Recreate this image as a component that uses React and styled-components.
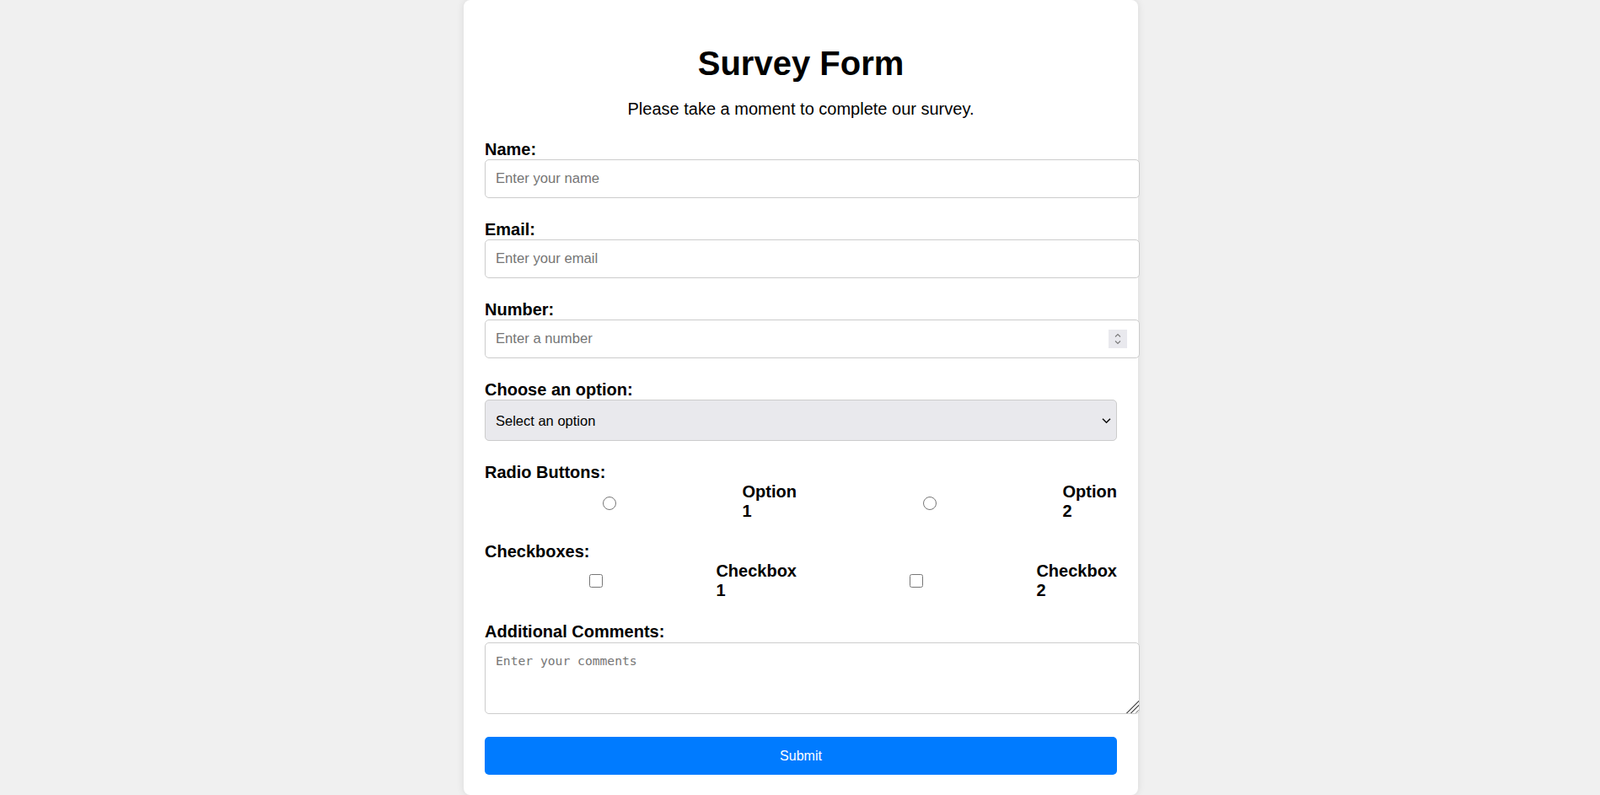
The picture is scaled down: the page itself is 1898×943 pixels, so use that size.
import React from "react";
import styled, { createGlobalStyle } from "styled-components";

const GlobalStyle = createGlobalStyle`
  html, body {
    margin: 0;
    padding: 0;
    background: #f0f0f0;
    font-family: "Liberation Sans", Arial, sans-serif;
  }
`;

const Card = styled.div`
  width: 750px;
  margin: 0 0 0 calc(50% - 399px);
  padding: 25px 25px 24px;
  background: #ffffff;
  border-radius: 8px;
  box-shadow: 0 0 10px rgba(0, 0, 0, 0.1);
`;

const Title = styled.h1`
  margin: 28px 0 20px;
  font-size: 40px;
  font-weight: bold;
  text-align: center;
  color: #000;
`;

const Subtitle = styled.p`
  margin: 0 0 25px;
  font-size: 20px;
  text-align: center;
  color: #000;
`;

const Form = styled.form`
  display: block;
`;

const Group = styled.div`
  margin-bottom: ${(p) => (p.$gap ? p.$gap : 26)}px;
`;

const Label = styled.label`
  display: block;
  margin: 0;
  font-size: 20px;
  font-weight: bold;
  color: #000;
`;

const Field = styled.div`
  position: relative;
`;

const TextInput = styled.input`
  display: block;
  box-sizing: content-box;
  width: 100%;
  margin: 0;
  padding: 12px 13px 12px 12px;
  font-family: "Liberation Sans", Arial, sans-serif;
  font-size: 16.67px;
  line-height: 20px;
  border: 1px solid #ccc;
  border-radius: 5px;
  background: #fff;
  color: #000;
  &::placeholder {
    color: #757575;
  }
  &::-webkit-inner-spin-button,
  &::-webkit-outer-spin-button {
    -webkit-appearance: none;
    margin: 0;
  }
  -moz-appearance: textfield;
`;

const Spinner = styled.span`
  position: absolute;
  right: -12px;
  top: 50%;
  transform: translateY(-50%);
  width: 22px;
  height: 22px;
  display: flex;
  align-items: center;
  justify-content: center;
  background: #e9e9ee;
  pointer-events: none;
`;

const Select = styled.select`
  display: block;
  box-sizing: border-box;
  width: 100%;
  margin: 0;
  padding: 12px 30px 12px 12px;
  height: 49px;
  font-family: "Liberation Sans", Arial, sans-serif;
  font-size: 16.5px;
  color: #000;
  background-color: #e9e9ed;
  border: 1px solid #ccc;
  border-radius: 5px;
  appearance: none;
  -webkit-appearance: none;
`;

const SelectArrow = styled.span`
  position: absolute;
  right: 7px;
  top: 50%;
  transform: translateY(-50%);
  display: flex;
  pointer-events: none;
`;

const ChoiceRow = styled.div`
  display: flex;
  gap: 10px;
`;

const Choice = styled.label`
  flex: 1 1 0;
  display: flex;
  align-items: center;
  gap: 10px;
  font-size: 20px;
  font-weight: bold;
  color: #000;
`;

const ControlSlot = styled.span`
  flex: 1 1 0;
  display: flex;
  justify-content: center;
  align-items: center;
`;

const Control = styled.input`
  margin: ${(p) => (p.type === "radio" ? "3px 0 0" : "0")};
  width: 16px;
  height: 16px;
`;

const ChoiceText = styled.span`
  width: min-content;
  line-height: 23px;
`;

const TextArea = styled.textarea`
  display: block;
  box-sizing: content-box;
  width: 100%;
  height: 59px;
  margin: 1px 0 0;
  padding: 12px 13px 12px 12px;
  font-family: "DejaVu Sans Mono", "Liberation Mono", monospace;
  font-size: 14.67px;
  border: 1px solid #ccc;
  border-radius: 5px;
  background: #fff;
  resize: both;
  &::placeholder {
    color: #757575;
  }
  &::-webkit-scrollbar {
    width: 16px;
    height: 16px;
    background: transparent;
  }
  &::-webkit-resizer {
    background:
      linear-gradient(135deg, #fff 50%, transparent 50%),
      repeating-linear-gradient(135deg, #fff 0 2.6px, #6e6e6e 2.6px 3.8px);
    border-bottom-right-radius: 5px;
  }
`;

const Submit = styled.button`
  display: block;
  width: 100%;
  height: 45px;
  margin: 0;
  padding: 0;
  font-family: "Liberation Sans", Arial, sans-serif;
  font-size: 16px;
  color: #fff;
  background: #007bff;
  border: none;
  border-radius: 5px;
  cursor: pointer;
`;

function SpinIcon() {
  return (
    <svg width="10" height="16" viewBox="0 0 10 16" aria-hidden="true">
      <path d="M2 5.5 L5 2.5 L8 5.5" fill="none" stroke="#7a7a7a" strokeWidth="1.1" />
      <path d="M2 10.5 L5 13.5 L8 10.5" fill="none" stroke="#7a7a7a" strokeWidth="1.1" />
    </svg>
  );
}

function ChevronIcon() {
  return (
    <svg width="11" height="7" viewBox="0 0 11 7" aria-hidden="true">
      <path d="M1 1.2 L5.5 5.7 L10 1.2" fill="none" stroke="#111" strokeWidth="1.6" />
    </svg>
  );
}

export default function App() {
  return (
    <>
      <GlobalStyle />
      <Card>
        <Title>Survey Form</Title>
        <Subtitle>Please take a moment to complete our survey.</Subtitle>
        <Form onSubmit={(e) => e.preventDefault()}>
          <Group>
            <Label htmlFor="name">Name:</Label>
            <TextInput id="name" type="text" placeholder="Enter your name" />
          </Group>
          <Group>
            <Label htmlFor="email">Email:</Label>
            <TextInput id="email" type="email" placeholder="Enter your email" />
          </Group>
          <Group>
            <Label htmlFor="number">Number:</Label>
            <Field>
              <TextInput id="number" type="number" placeholder="Enter a number" />
              <Spinner>
                <SpinIcon />
              </Spinner>
            </Field>
          </Group>
          <Group>
            <Label htmlFor="option">Choose an option:</Label>
            <Field>
              <Select id="option" defaultValue="">
                <option value="">Select an option</option>
                <option value="1">Option 1</option>
                <option value="2">Option 2</option>
              </Select>
              <SelectArrow>
                <ChevronIcon />
              </SelectArrow>
            </Field>
          </Group>
          <Group $gap={25}>
            <Label as="div">Radio Buttons:</Label>
            <ChoiceRow>
              <Choice>
                <ControlSlot>
                  <Control type="radio" name="radio" value="1" />
                </ControlSlot>
                <ChoiceText>Option 1</ChoiceText>
              </Choice>
              <Choice>
                <ControlSlot>
                  <Control type="radio" name="radio" value="2" />
                </ControlSlot>
                <ChoiceText>Option 2</ChoiceText>
              </Choice>
            </ChoiceRow>
          </Group>
          <Group>
            <Label as="div">Checkboxes:</Label>
            <ChoiceRow>
              <Choice>
                <ControlSlot>
                  <Control type="checkbox" value="1" />
                </ControlSlot>
                <ChoiceText>Checkbox 1</ChoiceText>
              </Choice>
              <Choice>
                <ControlSlot>
                  <Control type="checkbox" value="2" />
                </ControlSlot>
                <ChoiceText>Checkbox 2</ChoiceText>
              </Choice>
            </ChoiceRow>
          </Group>
          <Group $gap={27}>
            <Label htmlFor="comments">Additional Comments:</Label>
            <TextArea id="comments" placeholder="Enter your comments" />
          </Group>
          <Submit type="submit">Submit</Submit>
        </Form>
      </Card>
    </>
  );
}
